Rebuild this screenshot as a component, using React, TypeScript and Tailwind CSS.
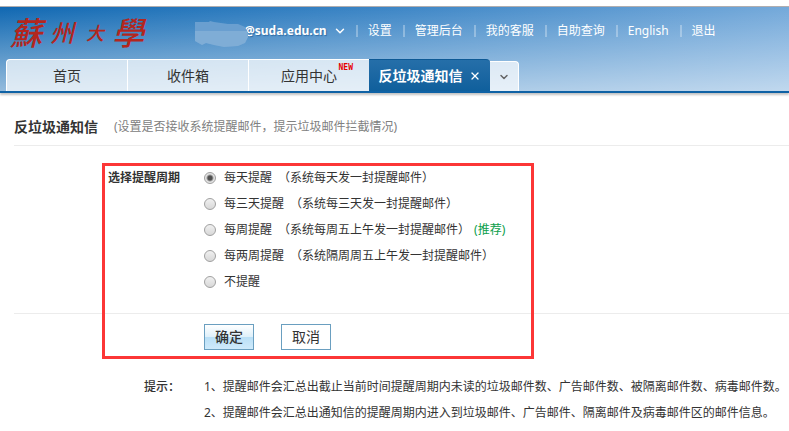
import { useState } from "react";
import { clsx } from "clsx";
import { ChevronDown, X } from "lucide-react";

const navLinks = ["设置", "管理后台", "我的客服", "自助查询", "English", "退出"];

const tabs = [
  { label: "首页" },
  { label: "收件箱" },
  { label: "应用中心", isNew: true },
];

const periods = [
  { value: "1d", label: "每天提醒", note: "（系统每天发一封提醒邮件）" },
  { value: "3d", label: "每三天提醒", note: "（系统每三天发一封提醒邮件）" },
  { value: "1w", label: "每周提醒", note: "（系统每周五上午发一封提醒邮件）", recommended: true },
  { value: "2w", label: "每两周提醒", note: "（系统隔周周五上午发一封提醒邮件）" },
  { value: "none", label: "不提醒" },
];

const tips = [
  "1、提醒邮件会汇总出截止当前时间提醒周期内未读的垃圾邮件数、广告邮件数、被隔离邮件数、病毒邮件数。",
  "2、提醒邮件会汇总出通知信的提醒周期内进入到垃圾邮件、广告邮件、隔离邮件及病毒邮件区的邮件信息。",
];

function Logo() {
  return (
    <a href="#" className="flex h-10 w-[150px] items-center italic font-medium leading-10 text-[#b3261e]">
      <span className="text-[32px]">蘇</span>
      <span className="ml-2 text-2xl">州</span>
      <span className="ml-3 text-lg">大</span>
      <span className="ml-2 text-[32px]">學</span>
    </a>
  );
}

function Account() {
  return (
    <button type="button" className="flex items-center text-white">
      {/* masked user name */}
      <svg viewBox="0 -6 54 32" className="relative -mr-1 h-8 w-[54px]" aria-hidden="true">
        <path d="M1 1 15 1 16 0 20 1 34 3 44 3 51 6 54 12 54 16 51 22 44 25 30 26 20 24 12 22 8 24 1 20Z" fill="#6a9fd0" />
        <path d="M1 10H53L54 16 51 22 44 25 30 26 20 24 12 22 8 24 1 20Z" fill="#7fadd6" />
      </svg>
      <span className="text-xs font-bold [text-shadow:1px_1px_1px_#2f6da6]">@suda.edu.cn</span>
      <ChevronDown className="-mr-0.5 ml-1.5 h-3.5 w-3.5" strokeWidth={2.5} />
    </button>
  );
}

function TopNav() {
  return (
    <nav className="flex items-center text-xs text-white">
      <Account />
      {navLinks.map((link) => (
        <div key={link} className="flex items-center">
          <span className="ml-[11px] mr-2.5 h-3 w-0.5 bg-white/30" />
          <a href="#" className="whitespace-nowrap">{link}</a>
        </div>
      ))}
    </nav>
  );
}

function TabBar() {
  return (
    <div className="flex items-end px-1.5 text-sm text-[#333]">
      {tabs.map((tab, i) => (
        <button
          key={tab.label}
          type="button"
          className={clsx(
            "relative h-8 w-[121px] border-l border-t border-white bg-white/70",
            i === 0 && "rounded-tl"
          )}
        >
          {tab.label}
          {tab.isNew && (
            <span className="absolute right-4 top-1 font-['DejaVu_Sans_Mono'] text-[8px] font-bold leading-2 text-[#e60000]">
              NEW
            </span>
          )}
        </button>
      ))}
      <div className="flex h-8 w-[121px] items-center justify-center gap-1.5 rounded-tr border-t border-[#0d5995] bg-linear-to-b from-[#256fa9] to-[#0f5f9c] text-white">
        <button type="button" className="font-bold">反垃圾通知信</button>
        <button type="button" aria-label="关闭">
          <X className="h-3 w-3" strokeWidth={2.5} />
        </button>
      </div>
      <button
        type="button"
        aria-label="更多标签"
        className="flex h-[30px] w-[29px] items-center justify-center rounded-tr border-r border-t border-white bg-white/70 text-[#666]"
      >
        <ChevronDown className="h-3 w-3" strokeWidth={3} />
      </button>
    </div>
  );
}

export default function App() {
  const [period, setPeriod] = useState("1d");

  return (
    <div className="bg-white pt-1.5 font-['Noto_Sans','Noto_Sans_CJK_SC',sans-serif] text-xs text-[#333]">
      <header className="border-b-2 border-t border-b-[#0f62a5] border-t-[#b0aeb0] bg-[linear-gradient(to_bottom,rgba(255,255,255,0),rgba(255,255,255,0.55)),linear-gradient(to_right,#1068b2,#3d86c6_50%,#74a9da)] shadow-[0_2px_2px_#c4c4c4]">
        <div className="flex h-[52px] items-start pl-2.5">
          <div className="pt-1.5">
            <Logo />
          </div>
          <div className="ml-[34px] pt-2">
            <TopNav />
          </div>
        </div>
        <TabBar />
      </header>

      <main className="pl-3.5">
        <div className="flex items-center border-b border-[#ececec] pb-1.5 pt-[22px] leading-6">
          <h1 className="text-sm font-bold">反垃圾通知信</h1>
          <p className="ml-4 text-[#808080]">(设置是否接收系统提醒邮件，提示垃圾邮件拦截情况)</p>
        </div>

        <form className="relative mt-[19px]" onSubmit={(e) => e.preventDefault()}>
          <fieldset className="flex gap-6 border-b border-[#ececec] pb-[18px] leading-[26px]" aria-labelledby="period-label">
            <span id="period-label" className="w-[166px] shrink-0 text-right font-bold">选择提醒周期</span>
            <div>
              {periods.map((p) => (
                <label key={p.value} className="flex items-center">
                  <input
                    type="radio"
                    name="period"
                    value={p.value}
                    checked={period === p.value}
                    onChange={() => setPeriod(p.value)}
                    className="mr-2 h-3 w-3 appearance-none rounded-full border border-[#a0a0a0] bg-linear-to-b from-[#f0f0f0] to-[#d8d8d8] checked:bg-[radial-gradient(circle,#505050_0_2px,#e4e4e4_4px)]"
                  />
                  {p.label}
                  {p.note && <span className="ml-1.5">{p.note}</span>}
                  {p.recommended && <span className="ml-1 text-[#0c9e4a]">(推荐)</span>}
                </label>
              ))}
            </div>
          </fieldset>

          <div className="flex gap-[27px] pl-[190px] pt-2.5 text-sm">
            <button
              type="submit"
              className="h-[26px] w-[50px] border border-[#6a9fc0] bg-[linear-gradient(to_bottom,#fff,#dff0fa_48%,#b9dff6_50%,#cfeafb)] font-medium"
            >
              确定
            </button>
            <button type="button" className="h-[26px] w-[50px] border border-[#6a9fc0] bg-white">
              取消
            </button>
          </div>

          {/* highlight frame around the settings */}
          <div className="pointer-events-none absolute -bottom-[9px] -top-0.5 left-[88px] w-[432px] border-3 border-[#fc3636]" />
        </form>

        <section className="mt-6 flex gap-6 pb-1 leading-[26px]">
          <h2 className="w-[166px] shrink-0 text-right font-medium">提示：</h2>
          <div className="whitespace-nowrap">
            {tips.map((tip) => (
              <p key={tip}>{tip}</p>
            ))}
          </div>
        </section>
      </main>
    </div>
  );
}
